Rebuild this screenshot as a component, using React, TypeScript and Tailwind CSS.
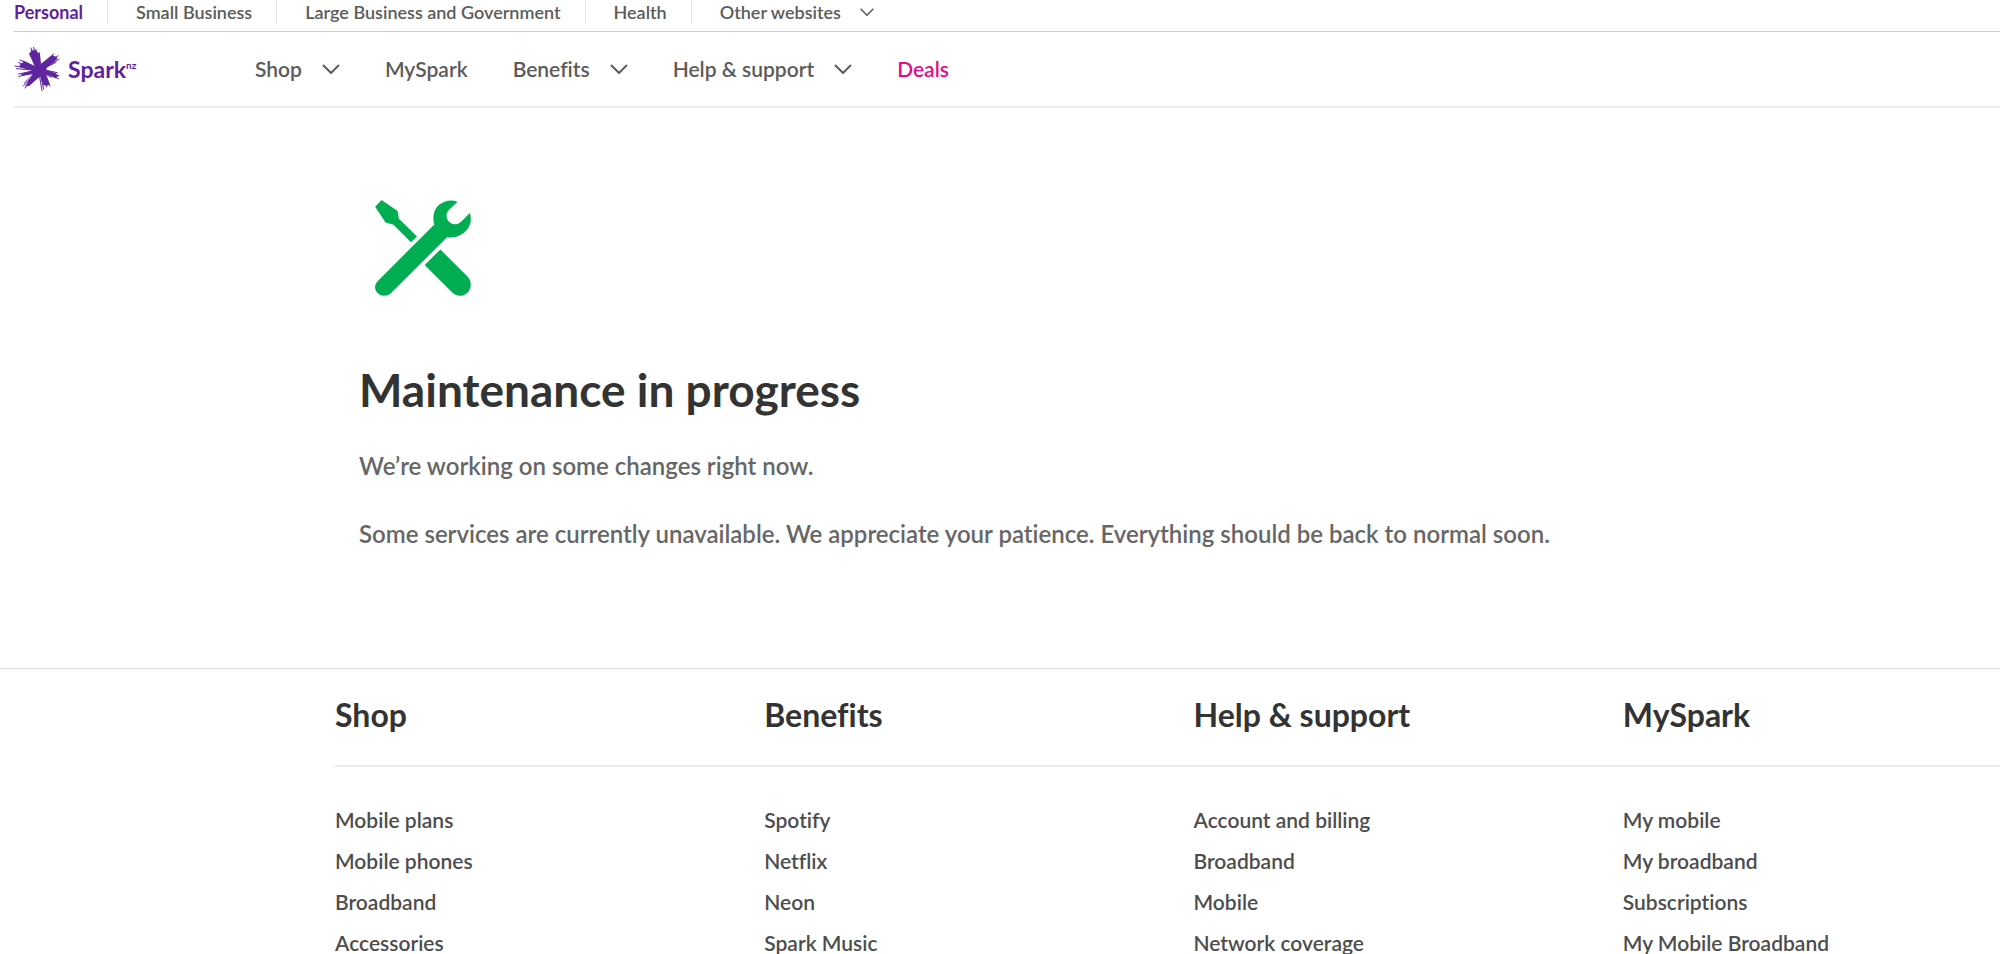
const sites = ['Small Business', 'Large Business and Government', 'Health'];

const navItems = [
  { label: 'Shop', menu: true },
  { label: 'MySpark', menu: false },
  { label: 'Benefits', menu: true },
  { label: 'Help & support', menu: true },
];

const footerColumns = [
  { title: 'Shop', links: ['Mobile plans', 'Mobile phones', 'Broadband', 'Accessories'] },
  { title: 'Benefits', links: ['Spotify', 'Netflix', 'Neon', 'Spark Music'] },
  { title: 'Help & support', links: ['Account and billing', 'Broadband', 'Mobile', 'Network coverage'] },
  { title: 'MySpark', links: ['My mobile', 'My broadband', 'Subscriptions', 'My Mobile Broadband'] },
];

function Chevron({ className }: { className: string }) {
  return (
    <svg viewBox="0 0 18 10" fill="none" stroke="currentColor" className={className} aria-hidden="true">
      <path d="M1 1l8 8 8-8" strokeWidth="2" />
    </svg>
  );
}

function SparkBurst() {
  return (
    <svg viewBox="42 33 138 138" className="h-[46px] w-[46px]" fill="#5f259f" stroke="#5f259f" strokeLinecap="round" aria-hidden="true">
      <path stroke="none" d="M104 94L88 58L94 46L106 46L120 58L123 86L156 60L170 66L172 72L142 97L138 104L168 115L174 126L164 128L138 118L150 148L142 152L130 150L121 124L88 152L76 154L98 118L70 122L62 118L96 106L62 98L58 90L72 80L100 92Z" />
      <g strokeWidth="3">
        <path d="M112 98L88 56M112 98L93 39M114 96L101 37M115 96L108 43M118 94L118 53" />
        <path d="M124 98L161 56M126 98L174 62M128 100L177 73M128 102L168 82" />
        <path d="M128 104L172 113M128 108L177 122M128 110L175 131M126 112L154 127" />
        <path d="M124 112L150 153M122 114L140 156M120 114L131 162M117 114L126 167" />
        <path d="M114 112L84 152M112 110L75 159M112 110L70 153M110 108L73 144" />
        <path d="M110 108L56 125M108 106L56 117M108 106L49 101M108 103L45 93" />
        <path d="M110 102L56 83M112 100L60 75M112 98L70 78" />
      </g>
    </svg>
  );
}

function ToolsIcon() {
  return (
    <svg viewBox="107 59 286 287" className="h-24 w-24" fill="#00ad51" aria-hidden="true">
      <path d="M126 59L174 92L178 115L232 168L214 185L162 133L138 126L107 79Z" />
      <path d="M302 207L383 288C397 303 395 325 383 336C371 349 349 348 337 335L255 253Z" />
      <path d="M353 64C320 52 280 74 281 113C281 121 282 126 284 132L115 301C103 313 105 329 115 338C125 348 143 348 154 338L322 170C356 177 393 151 393 116C393 109 392 104 390 98L364 124C353 134 338 134 329 125C318 115 317 99 328 88Z" />
    </svg>
  );
}

function TopBar() {
  return (
    <nav aria-label="Websites" className="ml-3.5 flex h-8 items-start border-b border-[#ccc] text-lg leading-6 text-[#5b5b5b]">
      <a href="#" className="pr-6 font-bold text-[#5f1f9e]">
        Personal
      </a>
      {sites.map((site) => (
        <a key={site} href="#" className="border-l border-[#e6e6e6] pr-6 pl-7">
          {site}
        </a>
      ))}
      <button type="button" className="flex items-center gap-[18px] border-l border-[#e6e6e6] pl-7">
        Other websites
        <Chevron className="h-2 w-4" />
      </button>
    </nav>
  );
}

function MainNav() {
  return (
    <header className="ml-3.5 flex h-[76px] items-center border-b-2 border-[#ebebeb] text-[21px] text-[#5b5b5b]">
      <a href="#" className="flex w-[241px] items-center gap-2 text-[#5f1f9e]">
        <SparkBurst />
        <span className="flex text-[23px] leading-8 font-bold">
          Spark<span className="text-[10px] leading-6 font-bold">nz</span>
        </span>
      </a>
      <nav aria-label="Main" className="flex items-center gap-[45px]">
        {navItems.map(({ label, menu }) =>
          menu ? (
            <button key={label} type="button" className="flex items-center gap-5">
              {label}
              <Chevron className="h-2.5 w-[18px]" />
            </button>
          ) : (
            <a key={label} href="#">
              {label}
            </a>
          )
        )}
        <a href="#" className="text-[#e20b8c]">
          Deals
        </a>
      </nav>
    </header>
  );
}

export default function App() {
  return (
    <div className="h-screen overflow-hidden bg-white font-['Lato',sans-serif] font-semibold [font-variant-ligatures:none]">
      <TopBar />
      <MainNav />

      <main className="px-[359px] pt-[92px] pb-[116px]">
        <div className="pl-4">
          <ToolsIcon />
        </div>
        <h1 className="mt-16 text-[46px] leading-[60px] font-bold text-[#333]">Maintenance in progress</h1>
        <p className="mt-7 text-2xl leading-9 text-[#666]">We’re working on some changes right now.</p>
        <p className="mt-8 text-2xl leading-9 whitespace-nowrap text-[#666]">
          Some services are currently unavailable. We appreciate your patience. Everything should be back to normal soon.
        </p>
      </main>

      <footer className="border-t border-[#ddd]">
        <div className="ml-[335px]">
          <div className="grid grid-cols-4 gap-x-[52px] border-b-2 border-[#ebebeb] pt-[26px] pb-[30px]">
            {footerColumns.map(({ title }) => (
              <h2 key={title} className="text-[32px] leading-10 font-bold text-[#333]">
                {title}
              </h2>
            ))}
          </div>
          <div className="grid grid-cols-4 gap-x-[52px] pt-8">
            {footerColumns.map(({ title, links }) => (
              <ul key={title} aria-label={title} className="text-[21px] leading-[41px] text-[#4d4d4d]">
                {links.map((link) => (
                  <li key={link}>
                    <a href="#">{link}</a>
                  </li>
                ))}
              </ul>
            ))}
          </div>
        </div>
      </footer>
    </div>
  );
}
